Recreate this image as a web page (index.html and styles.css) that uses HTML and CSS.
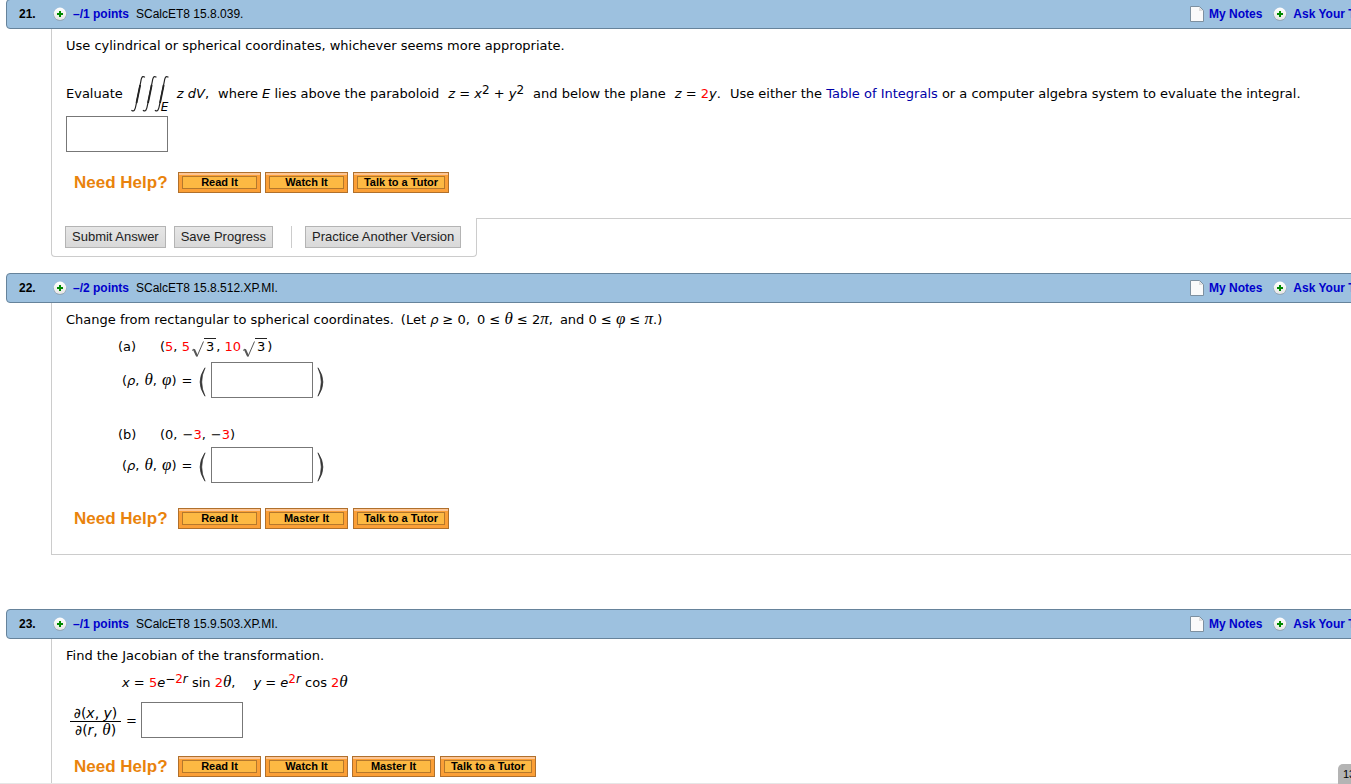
FILE: index.html
```html
<!DOCTYPE html>
<html lang="en">
<head>
<meta charset="utf-8">
<title>Assignment</title>
<link rel="stylesheet" href="styles.css">
</head>
<body>
<svg class="defs" aria-hidden="true">
  <defs>
    <linearGradient id="disc" x1="0" y1="0" x2="0" y2="1"><stop offset="0" stop-color="#fff"/><stop offset="1" stop-color="#e6e6e6"/></linearGradient>
    <symbol id="plus" viewBox="0 0 14 14"><circle cx="7" cy="7.4" r="6.4" fill="#8d9fad"/><circle cx="7" cy="6.8" r="6.2" fill="url(#disc)"/><path d="M4 7h6M7 4v6" stroke="#008a00" stroke-width="2"/></symbol>
    <symbol id="page" viewBox="0 0 14 16"><path d="M.5.5h9l4 4v11H.5z" fill="#fafafa" stroke="#7d90a0"/><path d="M9 1v4h4z" fill="#ddd"/><path d="M1 1h8v4h4v10H1z" fill="#fafafa"/><path d="M9.500 1.500v3h3" fill="none" stroke="#ddd"/></symbol>
    <symbol id="integrals" viewBox="0 0 38 38"><g fill="none" stroke="#222" stroke-width="1.200" stroke-linecap="round"><path d="M13.500 2C11 .5 10.300 3 9.700 7L5 30C4.200 35 3 37 .8 35.500"/><path d="M25 2C22.500.5 21.800 3 21.200 7L16.500 30C15.700 35 14.500 37 12.300 35.500"/><path d="M37 2C34.500.5 33.800 3 33.200 7L28.500 30C27.700 35 26.500 37 24.300 35.500"/></g><g fill="none" stroke="#222" stroke-width="1.800"><path d="M9.200 10L5.500 28"/><path d="M20.700 10L17 28"/><path d="M32.700 10L29 28"/></g></symbol>
    <symbol id="root" viewBox="0 0 13 17"><path d="M1 9.500l2-1.500 3 7.500L12.500.5" fill="none" stroke="#555" stroke-width="1"/><path d="M3 8.500l3 6.500" stroke="#555" stroke-width="2"/></symbol>
    <symbol id="lparen" viewBox="0 0 8 30"><path d="M7 .8Q-2.800 15 7 29.200Q.4 15 7 .8z" fill="#333" stroke="#333" stroke-width=".7"/></symbol>
    <symbol id="rparen" viewBox="0 0 8 30"><path d="M1 .8Q10.800 15 1 29.200Q7.600 15 1 .8z" fill="#333" stroke="#333" stroke-width=".7"/></symbol>
  </defs>
</svg>
<main>
  <section class="question">
    <header class="bar first">
      <b class="num">21.</b><svg class="plus"><use href="#plus"/></svg><a class="points" href="#q21">–/1 points</a><span>SCalcET8 15.8.039.</span>
      <div class="tools"><svg class="page"><use href="#page"/></svg><a class="notes" href="#notes">My Notes</a><svg class="plus"><use href="#plus"/></svg><a href="#ask">Ask Your Teacher</a></div>
    </header>
    <div class="content" id="q21">
      <p>Use cylindrical or spherical coordinates, whichever seems more appropriate.</p>
      <div class="evaluate">
        <span>Evaluate</span>
        <span class="integral"><svg><use href="#integrals"/></svg><i class="bound">E</i></span>
        <span class="sentence"><span><i>z dV</i>,</span><span>where <i>E</i> lies above the paraboloid</span><span><i>z</i> = <i>x</i><sup>2</sup> + <i>y</i><sup>2</sup></span><span>and below the plane</span><span><i>z</i> = <span class="red">2</span><i>y</i>.</span><span>Use either the <a class="plain" href="#table">Table of Integrals</a> or a computer algebra system to evaluate the integral.</span></span>
      </div>
      <input class="answer block" type="text" aria-label="Value of the integral">
      <div class="help"><strong>Need Help?</strong><button>Read It</button><button>Watch It</button><button class="wide">Talk to a Tutor</button></div>
    </div>
    <div class="foot">
      <div class="actions"><button>Submit Answer</button><button>Save Progress</button><span class="rule"></span><button>Practice Another Version</button></div>
      <div class="edge"></div>
    </div>
  </section>

  <section class="question">
    <header class="bar">
      <b class="num">22.</b><svg class="plus"><use href="#plus"/></svg><a class="points" href="#q22">–/2 points</a><span>SCalcET8 15.8.512.XP.MI.</span>
      <div class="tools"><svg class="page"><use href="#page"/></svg><a class="notes" href="#notes">My Notes</a><svg class="plus"><use href="#plus"/></svg><a href="#ask">Ask Your Teacher</a></div>
    </header>
    <div class="content closed" id="q22">
      <p class="spread"><span>Change from rectangular to spherical coordinates.</span><span>(Let <i>ρ</i> ≥ 0,</span><span>0 ≤ <i class="greek">θ</i> ≤ 2<i class="greek">π</i>,</span><span>and 0 ≤ <i class="greek">φ</i> ≤ <i class="greek">π</i>.)</span></p>
      <div class="part"><span class="label">(a)</span><span>(<span class="red">5</span>, <span class="red">5</span><svg class="root"><use href="#root"/></svg><span class="radicand">3</span>, <span class="red">10</span><svg class="root"><use href="#root"/></svg><span class="radicand">3</span>)</span></div>
      <div class="reply"><label for="a1"><span>(<i>ρ</i>,</span><span><i class="greek">θ</i>,</span><span><i class="greek">φ</i>)</span><span>=</span></label><svg class="paren"><use href="#lparen"/></svg><input class="answer" id="a1" type="text"><svg class="paren"><use href="#rparen"/></svg></div>
      <div class="part second"><span class="label">(b)</span><span class="tuple"><span>(0,</span><span>−<span class="red">3</span>,</span><span>−<span class="red">3</span>)</span></span></div>
      <div class="reply"><label for="b1"><span>(<i>ρ</i>,</span><span><i class="greek">θ</i>,</span><span><i class="greek">φ</i>)</span><span>=</span></label><svg class="paren"><use href="#lparen"/></svg><input class="answer" id="b1" type="text"><svg class="paren"><use href="#rparen"/></svg></div>
      <div class="help"><strong>Need Help?</strong><button>Read It</button><button>Master It</button><button class="wide">Talk to a Tutor</button></div>
    </div>
  </section>

  <section class="question">
    <header class="bar">
      <b class="num">23.</b><svg class="plus"><use href="#plus"/></svg><a class="points" href="#q23">–/1 points</a><span>SCalcET8 15.9.503.XP.MI.</span>
      <div class="tools"><svg class="page"><use href="#page"/></svg><a class="notes" href="#notes">My Notes</a><svg class="plus"><use href="#plus"/></svg><a href="#ask">Ask Your Teacher</a></div>
    </header>
    <div class="content" id="q23">
      <p>Find the Jacobian of the transformation.</p>
      <div class="equations"><span><i>x</i> = <span class="red">5</span><i>e</i><sup>−<span class="red">2</span><i>r</i></sup> sin <span class="red">2</span><i class="greek">θ</i>,</span><span><i>y</i> = <i>e</i><sup><span class="red">2</span><i>r</i></sup> cos <span class="red">2</span><i class="greek">θ</i></span></div>
      <div class="jacobian"><label for="j1"><span class="fraction"><span>∂(<i>x</i>, <i>y</i>)</span><span>∂(<i>r</i>, <i class="greek">θ</i>)</span></span>=</label><input class="answer" id="j1" type="text"></div>
      <div class="help"><strong>Need Help?</strong><button>Read It</button><button>Watch It</button><button>Master It</button><button class="wide">Talk to a Tutor</button></div>
    </div>
  </section>
</main>
<div class="status"></div>
<div class="badge">13</div>
</body>
</html>
```
FILE: styles.css
```css
* { box-sizing: border-box; }
html { overflow: hidden; }
body { margin: 0; background: #fff; color: #000; font: 13px/16px "DejaVu Sans", Verdana, sans-serif; overflow: hidden; height: 100vh; }
.defs { display: block; width: 0; height: 0; }
p { margin: 0; white-space: nowrap; }
.spread { display: flex; gap: 7px; }
a { color: #00c; text-decoration: none; }
a.plain { color: #0000a8; }
.red { color: #f00; }
.greek { font: italic 17px/0 "Liberation Serif", serif; }
sup { font-size: 12px; line-height: 0; vertical-align: 4px; }

.question { margin: 0 -60px 0 6px; }
.bar { display: flex; align-items: center; height: 30px; padding: 0 12px; border: 1px solid #66839b; border-radius: 4px; background: #9dc1df; font: 12px/16px "Liberation Sans", Arial, sans-serif; white-space: nowrap; }
.bar.first { margin-top: -1px; }
.bar a { font-weight: bold; }
.num { width: 34px; }
.plus { width: 14px; height: 14px; flex: none; }
.points { margin: 0 7px 0 6px; }
.tools { display: flex; align-items: center; width: 208px; margin-left: auto; }
.page { width: 14px; height: 16px; }
.notes { margin: 0 11px 0 5px; }
.tools .plus { margin-right: 6px; }

.content { margin-left: 45px; padding: 9px 0 25px 14px; border-left: 1px solid #ccc; }
.closed { border-bottom: 1px solid #ccc; margin-bottom: 54px; }
.answer { width: 102px; height: 36px; margin: 0; padding: 2px 6px; border: 1px solid #777; background: #fff; font: inherit; }
.answer.block { display: block; margin-top: 4px; }

.evaluate { display: flex; align-items: center; gap: 8px; height: 36px; margin-top: 22px; white-space: nowrap; }
.integral { display: flex; align-items: flex-end; width: 38px; height: 38px; }
.integral svg { width: 38px; height: 38px; flex: none; }
.bound { margin-left: -8px; font-size: 12px; line-height: 12px; }
.sentence { display: flex; gap: 9px; }

.help { display: flex; align-items: center; gap: 4px; margin: 20px 0 0 8px; }
.help strong { width: 100px; color: #e9830c; font: bold 17px/20px "Liberation Sans", Arial, sans-serif; }
.help button { width: 83px; height: 21px; padding: 0; border: 1px solid #b0702c; background: #fdb943; box-shadow: inset 0 2px 0 #fdc594, inset 0 0 0 3px #fb9f36, inset 0 0 0 4px #b5782c; color: #000; font: bold 11px/19px "Liberation Sans", Arial, sans-serif; }
.help .wide { width: 96px; margin-left: 1px; }

.foot { display: flex; margin-left: 45px; margin-bottom: 16px; }
.actions { display: flex; align-items: center; gap: 8px; height: 39px; padding: 0 15px 0 13px; border: solid #ccc; border-width: 0 1px 1px 1px; border-radius: 0 0 4px 4px; }
.actions button { height: 22px; padding: 0 6px; border: 1px solid #b4b4b4; background: linear-gradient(#e6e6e6, #d9d9d9); color: #222; font: 13px/20px "Liberation Sans", Arial, sans-serif; white-space: nowrap; }
.rule { width: 1px; height: 22px; margin: 0 5px 0 10px; background: #ccc; }
.edge { flex: 1; border-top: 1px solid #ccc; }

.part { display: flex; align-items: flex-end; height: 16px; margin: 11px 0 0 52px; white-space: nowrap; }
.part.second { margin-top: 29px; }
.tuple { display: flex; gap: 5px; }
.label { width: 42px; }
.root { width: 13px; height: 17px; margin: -4px 0 -4px 1px; vertical-align: -3px; }
.radicand { display: inline-block; padding: 0 2px; border-top: 1px solid #222; line-height: 16px; }
.reply { display: flex; align-items: center; margin: 7px 0 0 56px; }
.second + .reply { margin-top: 4px; }
.reply label { display: flex; gap: 5px; width: 75px; padding-top: 2px; white-space: nowrap; }
.paren { width: 8px; height: 30px; margin: 3px 5px 0 1px; }
.paren:last-child { margin: 3px 4px 0; }
.closed .help { margin-top: 25px; }

.equations { display: flex; gap: 18px; height: 16px; margin: 11px 0 0 56px; white-space: nowrap; }
.jacobian { display: flex; align-items: center; margin: 11px 0 0 4px; }
.jacobian label { display: flex; align-items: center; gap: 5px; width: 71px; padding-top: 2px; }
.fraction { display: flex; flex-direction: column; width: 51px; font-size: 14px; text-align: center; white-space: nowrap; }
.fraction span:first-child { border-bottom: 1px solid #000; }
.jacobian + .help { margin-top: 18px; }

.status { position: fixed; left: 0; right: 0; bottom: 0; height: 1px; background: #e6e6e6; }
.badge { position: fixed; right: -12px; bottom: 0; width: 25px; height: 20px; padding-left: 5px; border-radius: 5px 5px 0 0; background: #b4b4b4; font: 11px/20px "Liberation Sans", Arial, sans-serif; }
```
